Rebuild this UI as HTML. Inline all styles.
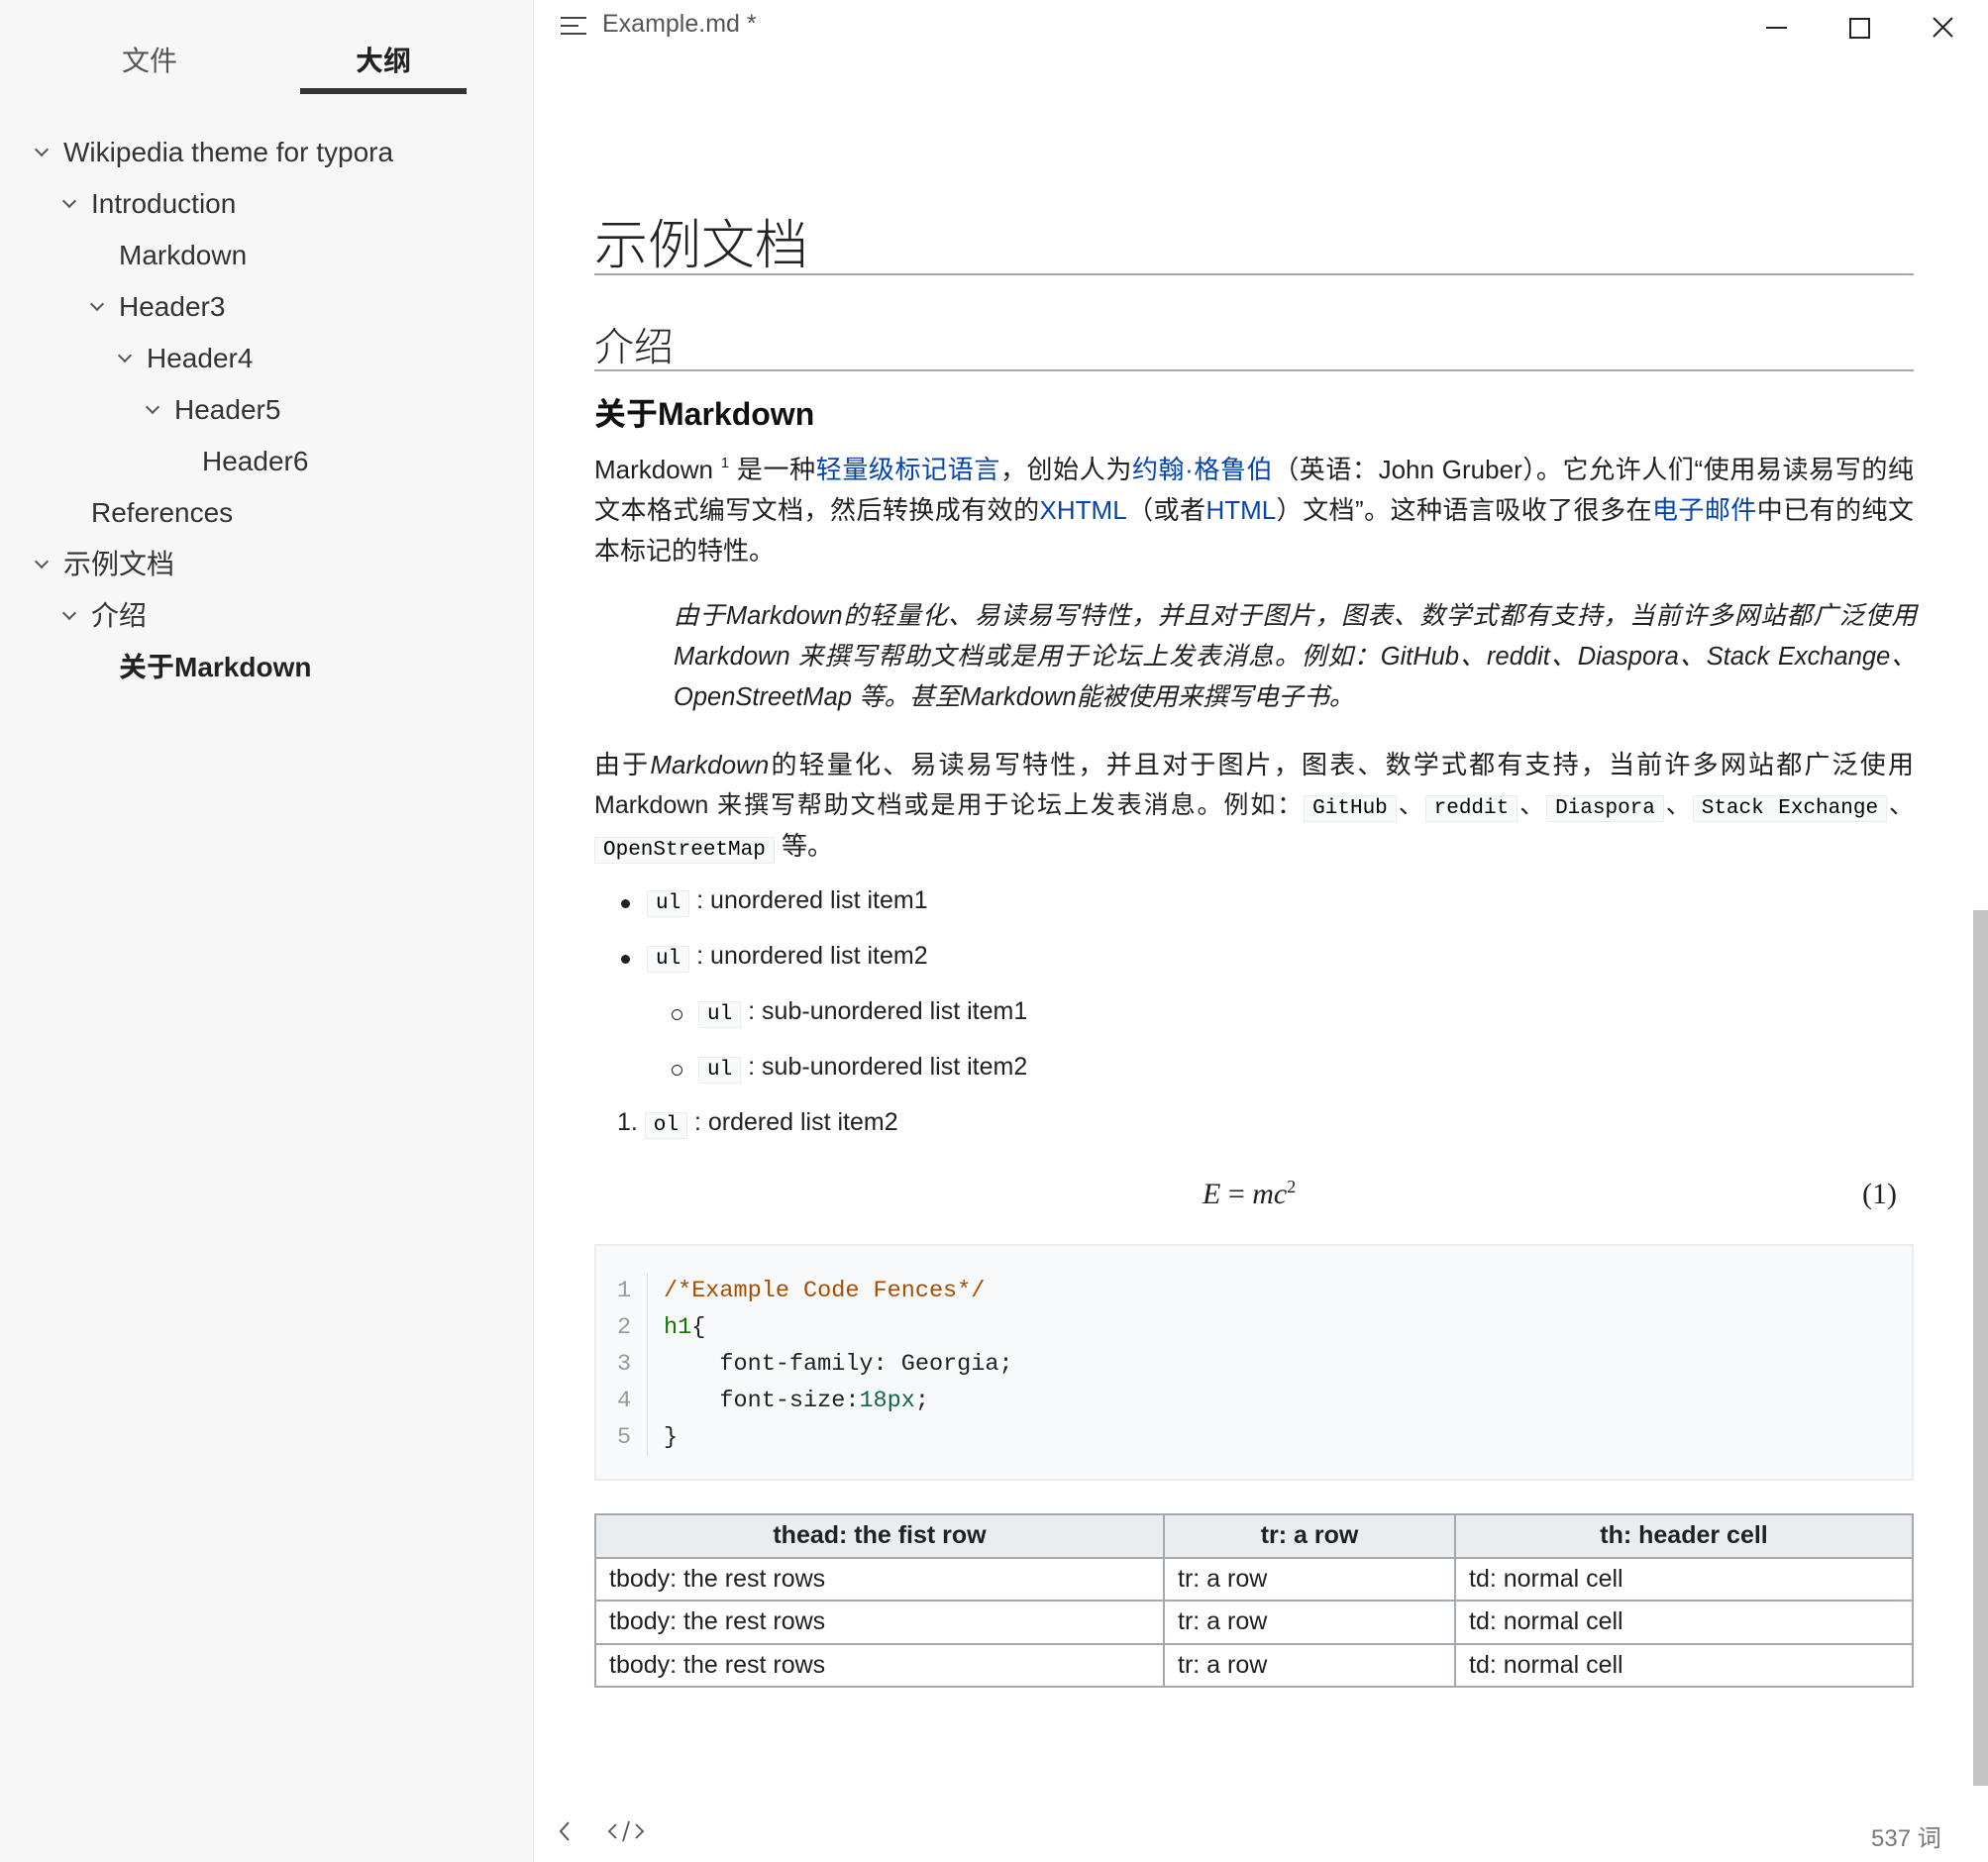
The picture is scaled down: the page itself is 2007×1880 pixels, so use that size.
<!DOCTYPE html>
<html><head><meta charset="utf-8"><style>
*{margin:0;padding:0;box-sizing:border-box}
body{width:2007px;height:1880px;overflow:hidden;background:#fff;font-family:"Liberation Sans","Noto Sans CJK SC",sans-serif;color:#202122;position:relative}
.side{position:absolute;left:0;top:0;width:539px;height:1880px;background:#f7f7f7;border-right:1px solid #e6e6e6}
.tab{position:absolute;top:40px;font-size:28px;color:#555}
.ul{position:absolute;left:303px;top:89px;width:168px;height:6px;background:#333}
.oi{position:absolute;font-size:28px;color:#333;white-space:nowrap;line-height:34px}
.chev{position:absolute;width:10px;height:10px;border-right:2px solid #555;border-bottom:2px solid #555;transform:rotate(45deg)}
.a{color:#0645ad}
.main{position:absolute;left:600px;width:1332px}
.l{font-size:26px;line-height:41px;height:41px;overflow:visible;text-align:justify;text-align-last:justify;white-space:nowrap}
.l.e{text-align-last:left}
.sp{font-size:15px;position:relative;top:-11px;line-height:0}
code{font-family:"Liberation Mono",monospace;font-size:21px;background:#f8f9fa;border:1px solid #eaecf0;padding:1px 8px;color:#000}
.li{position:absolute;font-size:25px;white-space:nowrap}
.dot{position:absolute;width:9px;height:9px;border-radius:50%;background:#202122}
.circ{position:absolute;width:11px;height:11px;border-radius:50%;border:1.5px solid #202122}
.code{position:absolute;left:600px;top:1256px;width:1332px;height:239px;background:#f8f9fa;border:2px solid #eaecf0}
.cl{position:absolute;font-family:"Liberation Mono",monospace;font-size:23.5px;white-space:pre}
.ln{color:#999}
table{position:absolute;left:600px;top:1528px;width:1332px;border-collapse:collapse;font-size:25px}
td,th{border:2px solid #a2a9b1;height:43.5px;padding:0 13px;text-align:left;font-weight:normal}
th{background:#eaecf0;font-weight:bold;text-align:center}
</style></head><body>
<div class="side">
<div class="tab" style="left:123px">文件</div>
<div class="tab" style="left:359px;color:#222;font-weight:bold">大纲</div>
<div class="ul"></div>
<div class="chev" style="left:37px;top:146px"></div><div class="oi" style="left:64px;top:137px">Wikipedia theme for typora</div>
<div class="chev" style="left:65px;top:198px"></div><div class="oi" style="left:92px;top:189px">Introduction</div>
<div class="oi" style="left:120px;top:241px">Markdown</div>
<div class="chev" style="left:93px;top:302px"></div><div class="oi" style="left:120px;top:293px">Header3</div>
<div class="chev" style="left:121px;top:354px"></div><div class="oi" style="left:148px;top:345px">Header4</div>
<div class="chev" style="left:149px;top:406px"></div><div class="oi" style="left:176px;top:397px">Header5</div>
<div class="oi" style="left:204px;top:449px">Header6</div>
<div class="oi" style="left:92px;top:501px">References</div>
<div class="chev" style="left:37px;top:562px"></div><div class="oi" style="left:64px;top:553px">示例文档</div>
<div class="chev" style="left:65px;top:614px"></div><div class="oi" style="left:92px;top:605px">介绍</div>
<div class="oi" style="left:120px;top:657px;font-weight:bold;color:#222">关于Markdown</div>
</div>

<svg style="position:absolute;left:565px;top:15px" width="30" height="22"><path d="M1 3h26M1 11h18M1 19h26" stroke="#444" stroke-width="2"/></svg>
<div style="position:absolute;left:608px;top:10px;font-size:25px;color:#555">Example.md *</div>
<svg style="position:absolute;left:1780px;top:14px" width="200" height="28"><path d="M3 14h21" stroke="#222" stroke-width="2"/><rect x="88" y="5" width="19" height="19" fill="none" stroke="#222" stroke-width="2"/><path d="M172 4l19 19M191 4l-19 19" stroke="#222" stroke-width="2"/></svg>

<div class="main" style="top:203px;font-size:54px;color:#222;font-weight:300">示例文档</div>
<div style="position:absolute;left:600px;top:276px;width:1332px;height:2px;background:#a2a9b1"></div>
<div class="main" style="top:318px;font-size:40px;color:#222;font-weight:300">介绍</div>
<div style="position:absolute;left:600px;top:373px;width:1332px;height:2px;background:#a2a9b1"></div>
<div class="main" style="top:393px;font-size:32px;font-weight:bold;color:#111">关于Markdown</div>

<div class="main" style="top:454px">
<div class="l">Markdown <span class="sp">1</span> 是一种<span class="a">轻量级标记语言</span>，创始人为<span class="a">约翰·格鲁伯</span>（英语：John Gruber）。它允许人们“使用易读易写的纯</div>
<div class="l">文本格式编写文档，然后转换成有效的<span class="a">XHTML</span>（或者<span class="a">HTML</span>）文档”。这种语言吸收了很多在<span class="a">电子邮件</span>中已有的纯文</div>
<div class="l e">本标记的特性。</div>
</div>

<div style="position:absolute;left:680px;top:602px;width:1255px;font-style:italic">
<div class="l" style="font-size:25.5px">由于Markdown的轻量化、易读易写特性，并且对于图片，图表、数学式都有支持，当前许多网站都广泛使用</div>
<div class="l" style="font-size:25.5px">Markdown 来撰写帮助文档或是用于论坛上发表消息。例如：GitHub、reddit、Diaspora、Stack Exchange、</div>
<div class="l e" style="font-size:25.5px">OpenStreetMap 等。甚至Markdown能被使用来撰写电子书。</div>
</div>

<div class="main" style="top:752px">
<div class="l">由于<i>Markdown</i>的轻量化、易读易写特性，并且对于图片，图表、数学式都有支持，当前许多网站都广泛使用</div>
<div class="l" style="font-size:25px">Markdown 来撰写帮助文档或是用于论坛上发表消息。例如：<code>GitHub</code>、<code>reddit</code>、<code>Diaspora</code>、<code>Stack Exchange</code>、</div>
<div class="l e"><code>OpenStreetMap</code> 等。</div>
</div>

<div class="dot" style="left:627px;top:908px"></div><div class="li" style="left:653px;top:895px"><code>ul</code> : unordered list item1</div>
<div class="dot" style="left:627px;top:964px"></div><div class="li" style="left:653px;top:951px"><code>ul</code> : unordered list item2</div>
<div class="circ" style="left:678px;top:1019px"></div><div class="li" style="left:705px;top:1007px"><code>ul</code> : sub-unordered list item1</div>
<div class="circ" style="left:678px;top:1075px"></div><div class="li" style="left:705px;top:1063px"><code>ul</code> : sub-unordered list item2</div>
<div class="li" style="left:623px;top:1119px">1. <code>ol</code> : ordered list item2</div>

<div style="position:absolute;left:1214px;top:1188px;font-family:'Liberation Serif',serif;font-size:30px"><i>E</i> = <i>mc</i><sup style="font-size:18px">2</sup></div>
<div style="position:absolute;left:1880px;top:1189px;font-family:'Liberation Serif',serif;font-size:30px">(1)</div>

<div class="code"></div>
<div style="position:absolute;left:653px;top:1285px;width:1px;height:185px;background:#ddd"></div>
<div class="cl ln" style="left:623px;top:1285px;line-height:37px">1
2
3
4
5</div>
<div class="cl" style="left:670px;top:1285px;line-height:37px"><span style="color:#a64d00">/*Example Code Fences*/</span>
<span style="color:#170">h1</span>{
    font-family: Georgia;
    font-size:<span style="color:#164">18px</span>;
}</div>

<table><tr><th style="width:574px">thead: the fist row</th><th style="width:294px">tr: a row</th><th>th: header cell</th></tr>
<tr><td>tbody: the rest rows</td><td>tr: a row</td><td>td: normal cell</td></tr>
<tr><td>tbody: the rest rows</td><td>tr: a row</td><td>td: normal cell</td></tr>
<tr><td>tbody: the rest rows</td><td>tr: a row</td><td>td: normal cell</td></tr></table>

<div style="position:absolute;left:1992px;top:919px;width:15px;height:884px;background:#c4c4c4"></div>
<svg style="position:absolute;left:562px;top:1836px" width="110" height="30"><path d="M12 4l-8 9 8 9" fill="none" stroke="#555" stroke-width="2"/><path d="M60 6l-7 7 7 7M80 6l7 7-7 7M73 3l-6 20" fill="none" stroke="#555" stroke-width="1.8"/></svg>
<div style="position:absolute;left:1889px;top:1836px;font-size:24px;color:#777">537 词</div>
</body></html>
